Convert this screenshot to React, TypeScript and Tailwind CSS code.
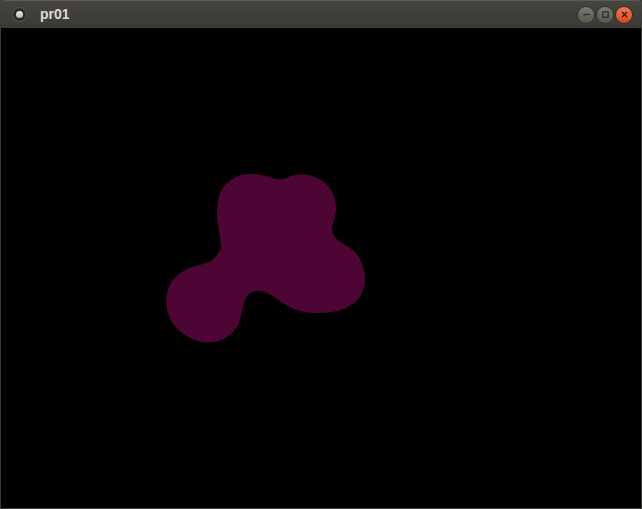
type Pt = [number, number];

// outline of the blob, traced clockwise
const pts: Pt[] = [
  [221, 247], [219, 231], [217, 215], [218, 201], [222, 189], [231, 180],
  [241, 175], [252, 174], [262, 175], [271, 177.5], [280, 179.5], [289, 177],
  [298, 174.5], [308, 175], [317, 178], [325, 183], [331, 190], [335, 200],
  [336, 210], [334.5, 220], [332, 229], [335, 237], [342, 243], [350, 248],
  [356, 253], [361, 261], [364, 270], [365, 280], [363, 290], [358, 299],
  [350, 306], [341, 310], [332, 312], [320, 313], [308, 312.5], [297, 310],
  [288, 306], [279, 300.5], [272, 295.5], [264, 292], [257, 291], [250, 293],
  [246, 298], [243, 307], [241, 316], [238, 325], [233, 332], [227, 337],
  [219, 341], [210, 342.5], [200, 341.5], [190, 338], [181, 332], [173, 324],
  [168, 313], [166, 302], [168, 290], [173, 280], [181, 272.5], [191, 267.5],
  [201, 264.5], [209, 262], [215, 257.5], [219, 252],
];

// closed catmull-rom -> cubic bezier
function blobPath(p: Pt[]) {
  const n = p.length;
  const f = (v: number) => v.toFixed(1);
  let d = `M${f(p[0][0])},${f(p[0][1])}`;
  for (let i = 0; i < n; i++) {
    const p0 = p[(i - 1 + n) % n];
    const p1 = p[i];
    const p2 = p[(i + 1) % n];
    const p3 = p[(i + 2) % n];
    const c1x = p1[0] + (p2[0] - p0[0]) / 6;
    const c1y = p1[1] + (p2[1] - p0[1]) / 6;
    const c2x = p2[0] - (p3[0] - p1[0]) / 6;
    const c2y = p2[1] - (p3[1] - p1[1]) / 6;
    d += ` C${f(c1x)},${f(c1y)} ${f(c2x)},${f(c2y)} ${f(p2[0])},${f(p2[1])}`;
  }
  return d + " Z";
}

const BLOB = blobPath(pts);

function WinButton({ kind }: { kind: "min" | "max" | "close" }) {
  const isClose = kind === "close";
  return (
    <div
      className={
        isClose
          ? "flex size-[18px] items-center justify-center rounded-full border border-[#3a2a22] bg-linear-to-b from-[#f27a4c] to-[#d9461c]"
          : "flex size-[18px] items-center justify-center rounded-full border border-[#33332f] bg-linear-to-b from-[#7a7a74] to-[#56564f]"
      }
    >
      <svg width="9" height="9" viewBox="0 0 9 9">
        {kind === "min" && <path d="M1.5 4.5h6" stroke="#2e2e2b" strokeWidth="1.4" />}
        {kind === "max" && (
          <rect x="1.8" y="1.8" width="5.4" height="5.4" fill="none" stroke="#2e2e2b" strokeWidth="1.3" />
        )}
        {isClose && <path d="M2 2l5 5M7 2l-5 5" stroke="#3b1608" strokeWidth="1.4" />}
      </svg>
    </div>
  );
}

export default function App() {
  return (
    <div className="flex h-[509px] w-[642px] flex-col overflow-hidden bg-[#3c3b37] font-['Liberation_Sans',sans-serif]">
      <div className="flex h-[28px] shrink-0 items-center rounded-t-[5px] border-t border-[#5a5954] bg-linear-to-b from-[#45443f] to-[#3a3935] pr-[9px] pl-[13px]">
        <div className="flex size-[13px] items-center justify-center rounded-full bg-[#2a2a27] ring-1 ring-[#55554f]">
          <div className="size-[7px] rounded-full bg-linear-to-b from-[#ececea] to-[#b5b5b1]" />
        </div>
        <span className="ml-[14px] text-[14px] font-bold text-[#dfdbd2]">pr01</span>
        <div className="ml-auto flex items-center gap-px">
          <WinButton kind="min" />
          <WinButton kind="max" />
          <WinButton kind="close" />
        </div>
      </div>
      <div className="flex-1 px-px pb-px">
        <svg className="block h-full w-full bg-black" viewBox="1 28 640 480" preserveAspectRatio="none">
          <path d={BLOB} fill="#4d0533" />
        </svg>
      </div>
    </div>
  );
}
